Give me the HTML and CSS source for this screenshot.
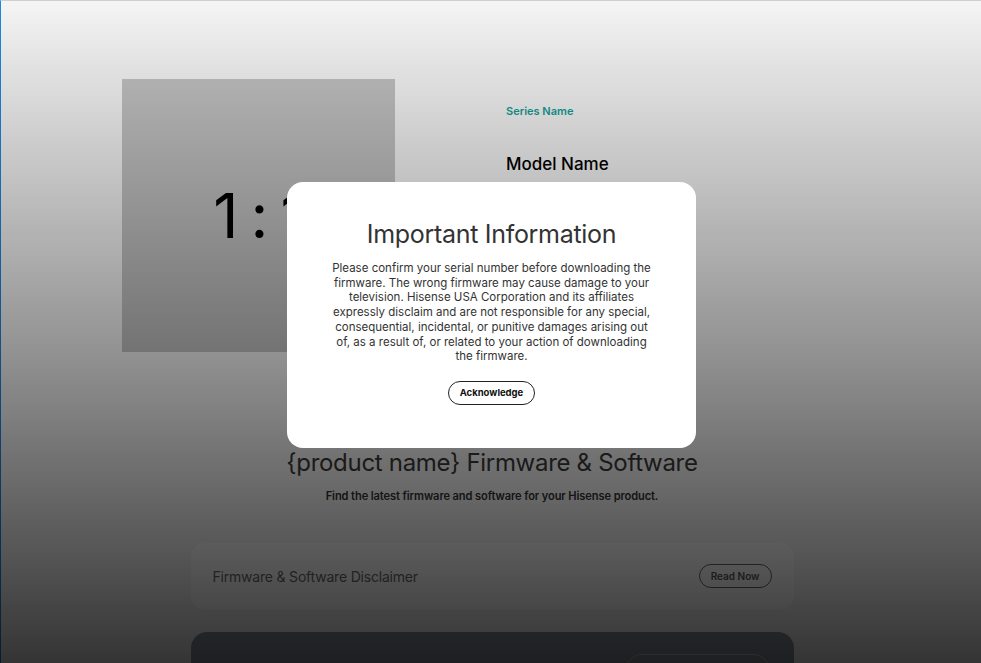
FILE: index.html
```html
<!DOCTYPE html>
<html lang="en">
<head>
<meta charset="utf-8">
<title>Firmware &amp; Software</title>
<link rel="stylesheet" href="styles.css">
</head>
<body>
<div class="page">
  <section class="hero">
    <div class="thumb"><span class="ratio">1:1</span></div>
    <div class="info">
      <div class="series">Series Name</div>
      <h1 class="model">Model Name</h1>
    </div>
  </section>
  <section class="fw">
    <h2 class="fw-title">{product name} Firmware &amp; Software</h2>
    <p class="fw-sub">Find the latest firmware and software for your Hisense product.</p>
    <div class="disclaimer">
      <span class="disclaimer-text">Firmware &amp; Software Disclaimer</span>
      <button class="pill pill-dim">Read Now</button>
    </div>
    <div class="dark-card">
      <div class="pill pill-dark"></div>
    </div>
  </section>
</div>
<div class="overlay"></div>
<div class="modal-wrap">
  <div class="modal">
    <h3 class="modal-title">Important Information</h3>
    <p class="modal-text">Please confirm your serial number before downloading the firmware. The wrong firmware may cause damage to your television. Hisense USA Corporation and its affiliates expressly disclaim and are not responsible for any special, consequential, incidental, or punitive damages arising out of, as a result of, or related to your action of downloading the firmware.</p>
    <button class="pill pill-ack">Acknowledge</button>
  </div>
</div>
</body>
</html>
```
FILE: styles.css
```css
* { box-sizing: border-box; }
html, body { margin: 0; padding: 0; }
body {
  font-family: Inter, "Noto Sans", sans-serif;
  background: #f5f5f5;
  border-top: 1px solid #cfcfcf;
  border-left: 1px solid #1e88e5;
  height: 663px;
  overflow: hidden;
  color: #333;
}
.page {
  display: flex;
  flex-direction: column;
  align-items: center;
}
.hero {
  display: flex;
  width: 737px;
  margin-left: -1px;
  padding-top: 78px;
  gap: 111px;
}
.thumb {
  width: 273px;
  height: 273px;
  background: #c2c2c2;
  display: flex;
  align-items: center;
  justify-content: center;
  flex: none;
}
.ratio {
  font-size: 62px;
  font-weight: 400;
  color: #000;
  letter-spacing: 12px;
  margin-left: 14px;
}
.info { padding-top: 25px; }
.series {
  font-size: 11px;
  font-weight: 600;
  color: #139e96;
}
.model {
  margin: 36px 0 0;
  font-size: 17px;
  font-weight: 500;
  color: #000;
}
.fw {
  width: 603px;
  margin-left: 2px;
  display: flex;
  flex-direction: column;
  align-items: center;
  padding-top: 96px;
}
.fw-title {
  margin: 0;
  font-size: 24px;
  font-weight: 400;
  color: #3a3a3a;
  letter-spacing: -0.3px;
}
.fw-sub {
  margin: 12px 0 0;
  font-size: 11.1px;
  font-weight: 600;
  color: #333;
  letter-spacing: -0.1px;
}
.disclaimer {
  margin-top: 40px;
  align-self: stretch;
  height: 66px;
  border-radius: 14px;
  background: #ffffff;
  display: flex;
  align-items: center;
  justify-content: space-between;
  padding: 0 22px;
}
.disclaimer-text {
  font-size: 14px;
  color: #6a6a6a;
  letter-spacing: -0.2px;
}
.pill {
  font-family: inherit;
  background: transparent;
  border-radius: 999px;
  cursor: pointer;
}
.pill-dim {
  border: 1px solid #666;
  color: #5a5a5a;
  font-size: 10px;
  font-weight: 600;
  height: 24px;
  padding: 0 11px;
}
.dark-card {
  margin-top: 23px;
  align-self: stretch;
  height: 120px;
  border-radius: 16px;
  background: #8a969e;
  display: flex;
  justify-content: flex-end;
  align-items: flex-start;
  padding: 22px 24px 0 0;
}
.pill-dark {
  width: 145px;
  height: 34px;
  border: 1px solid #bfc4c8;
}
.overlay {
  position: fixed;
  inset: 0;
  background: linear-gradient(to bottom, rgba(0,0,0,0) 0%, rgba(0,0,0,0.42) 55%, rgba(0,0,0,0.79) 100%);
}
.modal-wrap {
  position: fixed;
  inset: 0;
  display: flex;
  justify-content: center;
  align-items: flex-start;
  padding-top: 182px;
  padding-left: 2px;
}
.modal {
  width: 409px;
  height: 266px;
  background: #fff;
  border-radius: 16px;
  display: flex;
  flex-direction: column;
  align-items: center;
  padding: 37px 40px 0;
}
.modal-title {
  margin: 0;
  font-size: 25px;
  font-weight: 400;
  color: #333;
  letter-spacing: -0.3px;
}
.modal-text {
  margin: 12px 0 0;
  width: 322px;
  font-size: 11.5px;
  line-height: 14.7px;
  text-align: center;
  color: #333;
}
.pill-ack {
  margin-top: 17px;
  height: 24px;
  padding: 0 11px;
  border: 1px solid #222;
  color: #111;
  font-size: 9.5px;
  font-weight: 700;
}
```
